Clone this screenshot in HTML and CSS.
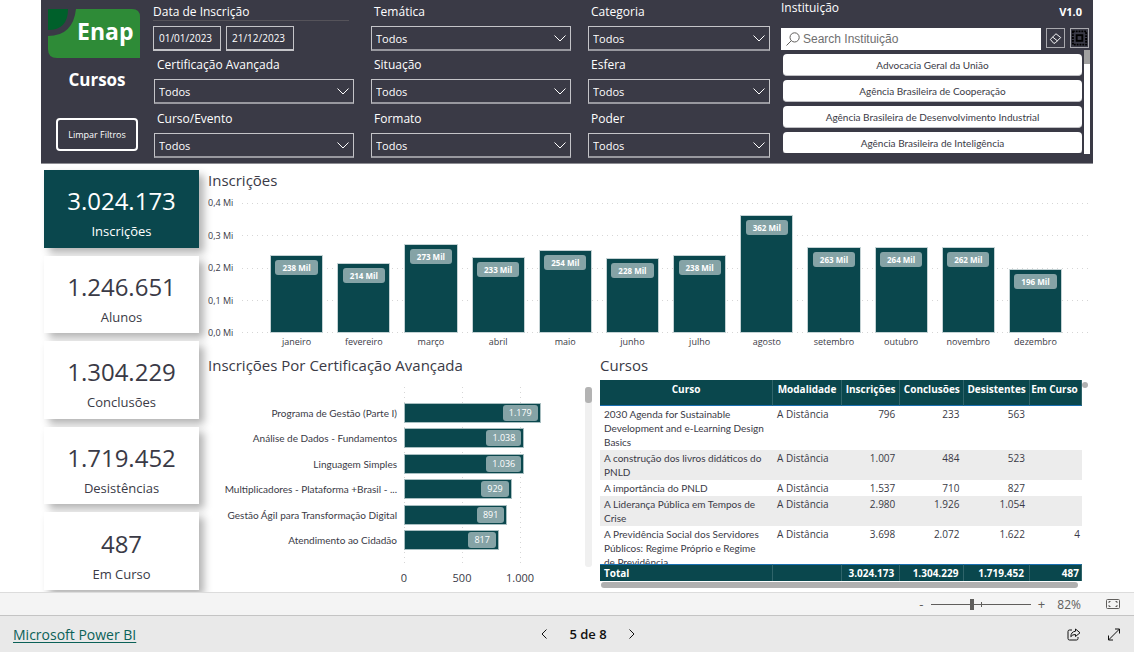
FILE: index.html
```html
<!DOCTYPE html>
<html lang="pt-BR">
<head>
<meta charset="utf-8">
<title>Enap Cursos</title>
<link rel="stylesheet" href="styles.css">
</head>
<body>
<main class="report">
  <header class="filters">
    <div class="brand">
      <svg class="logo" viewBox="0 0 92 49" role="img" aria-label="Enap">
        <path fill="#2e8b37" d="M28 0H84Q92 0 92 8V49H9Q0 49 0 40V27Q25 27 28 0Z"/>
        <path fill="#00602b" d="M0 0H20Q20 21 0 21Z"/>
        <text class="logo-text" x="29" y="31">Enap</text>
      </svg>
      <h1 class="brand-title">Cursos</h1>
      <button class="clear" type="button">Limpar Filtros</button>
    </div>
    <div class="slicers">
      <div class="field dates">
        <label for="d1">Data de Inscrição</label>
        <div class="date-row">
          <input id="d1" type="text" value="01/01/2023">
          <input type="text" value="21/12/2023" aria-label="Data final">
        </div>
      </div>
      <div class="field"><label for="s1">Temática</label><div class="pick"><select id="s1"><option>Todos</option></select><svg viewBox="0 0 12 7"><path d="M.5 .5 6 6 11.5 .5"/></svg></div></div>
      <div class="field"><label for="s2">Categoria</label><div class="pick"><select id="s2"><option>Todos</option></select><svg viewBox="0 0 12 7"><path d="M.5 .5 6 6 11.5 .5"/></svg></div></div>
      <div class="field"><label for="s3">Certificação Avançada</label><div class="pick"><select id="s3"><option>Todos</option></select><svg viewBox="0 0 12 7"><path d="M.5 .5 6 6 11.5 .5"/></svg></div></div>
      <div class="field"><label for="s4">Situação</label><div class="pick"><select id="s4"><option>Todos</option></select><svg viewBox="0 0 12 7"><path d="M.5 .5 6 6 11.5 .5"/></svg></div></div>
      <div class="field"><label for="s5">Esfera</label><div class="pick"><select id="s5"><option>Todos</option></select><svg viewBox="0 0 12 7"><path d="M.5 .5 6 6 11.5 .5"/></svg></div></div>
      <div class="field"><label for="s6">Curso/Evento</label><div class="pick"><select id="s6"><option>Todos</option></select><svg viewBox="0 0 12 7"><path d="M.5 .5 6 6 11.5 .5"/></svg></div></div>
      <div class="field"><label for="s7">Formato</label><div class="pick"><select id="s7"><option>Todos</option></select><svg viewBox="0 0 12 7"><path d="M.5 .5 6 6 11.5 .5"/></svg></div></div>
      <div class="field"><label for="s8">Poder</label><div class="pick"><select id="s8"><option>Todos</option></select><svg viewBox="0 0 12 7"><path d="M.5 .5 6 6 11.5 .5"/></svg></div></div>
    </div>
    <div class="inst">
      <div class="inst-head"><label for="q">Instituição</label><span class="version">V1.0</span></div>
      <div class="search-row">
        <div class="search">
          <svg viewBox="0 0 14 14"><circle cx="8.6" cy="5.4" r="4.6"/><path d="M5.3 8.7.5 13.5"/></svg>
          <input id="q" type="text" placeholder="Search Instituição">
        </div>
        <button class="tool" type="button" aria-label="Limpar"><svg viewBox="0 0 18 18"><path d="M3.500 10.500 9.500 4.500 14.500 8.500 8.500 14.500H7ZM6 8l5 4"/></svg></button>
        <button class="tool" type="button" aria-label="Selecionar tudo"><svg viewBox="0 0 18 18"><rect class="dots" x="2" y="2" width="14" height="14"/><rect class="box" x="6" y="6" width="6" height="6"/></svg></button>
      </div>
      <div class="inst-body">
        <div class="inst-list">
          <button type="button">Advocacia Geral da União</button>
          <button type="button">Agência Brasileira de Cooperação</button>
          <button type="button">Agência Brasileira de Desenvolvimento Industrial</button>
          <button type="button">Agência Brasileira de Inteligência</button>
        </div>
        <div class="inst-scroll"><div class="inst-thumb"></div></div>
      </div>
    </div>
  </header>

  <div class="body">
    <aside class="kpis">
      <div class="kpi active"><strong>3.024.173</strong><span>Inscrições</span></div>
      <div class="kpi"><strong>1.246.651</strong><span>Alunos</span></div>
      <div class="kpi"><strong>1.304.229</strong><span>Conclusões</span></div>
      <div class="kpi"><strong>1.719.452</strong><span>Desistências</span></div>
      <div class="kpi"><strong>487</strong><span>Em Curso</span></div>
    </aside>
    <div class="visuals">
      <section class="monthly">
        <h2>Inscrições</h2>
        <div class="columns-chart">
          <div class="y-axis"><span>0,4 Mi</span><span>0,3 Mi</span><span>0,2 Mi</span><span>0,1 Mi</span><span>0,0 Mi</span></div>
          <div class="plot">
            <div class="h-grid"><i></i><i></i><i></i><i></i><i></i></div>
            <div class="columns">
              <div class="column" style="height:59.9%"><span>238 Mil</span></div>
              <div class="column" style="height:53.8%"><span>214 Mil</span></div>
              <div class="column" style="height:68.6%"><span>273 Mil</span></div>
              <div class="column" style="height:58.7%"><span>233 Mil</span></div>
              <div class="column" style="height:63.8%"><span>254 Mil</span></div>
              <div class="column" style="height:57.4%"><span>228 Mil</span></div>
              <div class="column" style="height:59.9%"><span>238 Mil</span></div>
              <div class="column" style="height:90.6%"><span>362 Mil</span></div>
              <div class="column" style="height:66.1%"><span>263 Mil</span></div>
              <div class="column" style="height:66.4%"><span>264 Mil</span></div>
              <div class="column" style="height:65.9%"><span>262 Mil</span></div>
              <div class="column" style="height:49.4%"><span>196 Mil</span></div>
            </div>
          </div>
          <div class="months"><span>janeiro</span><span>fevereiro</span><span>março</span><span>abril</span><span>maio</span><span>junho</span><span>julho</span><span>agosto</span><span>setembro</span><span>outubro</span><span>novembro</span><span>dezembro</span></div>
        </div>
      </section>
      <section class="certs">
        <h2>Inscrições Por Certificação Avançada</h2>
        <div class="bars-chart">
          <div class="names"><span>Programa de Gestão (Parte I)</span><span>Análise de Dados - Fundamentos</span><span>Linguagem Simples</span><span>Multiplicadores - Plataforma +Brasil - ...</span><span>Gestão Ágil para Transformação Digital</span><span>Atendimento ao Cidadão</span></div>
          <div class="bar-plot">
            <div class="v-grid"><i></i><i></i><i></i></div>
            <div class="bars">
              <div class="bar" style="width:78.6%"><span>1.179</span></div>
              <div class="bar" style="width:69.2%"><span>1.038</span></div>
              <div class="bar" style="width:69.1%"><span>1.036</span></div>
              <div class="bar" style="width:61.9%"><span>929</span></div>
              <div class="bar" style="width:59.4%"><span>891</span></div>
              <div class="bar" style="width:54.5%"><span>817</span></div>
            </div>
          </div>
          <div class="v-scroll"><div class="v-thumb"></div></div>
          <div class="x-axis"><span>0</span><span>500</span><span>1.000</span></div>
        </div>
      </section>
      <section class="courses">
        <h2>Cursos</h2>
        <div class="table-row">
          <div class="table-wrap">
            <table>
              <colgroup><col class="c1"><col class="c2"><col class="c3"><col class="c4"><col class="c5"><col class="c6"></colgroup>
              <thead><tr><th>Curso</th><th>Modalidade</th><th>Inscrições</th><th>Conclusões</th><th>Desistentes</th><th>Em Curso</th></tr></thead>
              <tbody>
                <tr><td>2030 Agenda for Sustainable Development and e-Learning Design Basics</td><td>A Distância</td><td>796</td><td>233</td><td>563</td><td></td></tr>
                <tr><td>A construção dos livros didáticos do PNLD</td><td>A Distância</td><td>1.007</td><td>484</td><td>523</td><td></td></tr>
                <tr><td>A importância do PNLD</td><td>A Distância</td><td>1.537</td><td>710</td><td>827</td><td></td></tr>
                <tr><td>A Liderança Pública em Tempos de Crise</td><td>A Distância</td><td>2.980</td><td>1.926</td><td>1.054</td><td></td></tr>
                <tr><td>A Previdência Social dos Servidores Públicos: Regime Próprio e Regime de Previdência</td><td>A Distância</td><td>3.698</td><td>2.072</td><td>1.622</td><td>4</td></tr>
              </tbody>
              <tfoot><tr><td>Total</td><td></td><td>3.024.173</td><td>1.304.229</td><td>1.719.452</td><td>487</td></tr></tfoot>
            </table>
          </div>
          <div class="dot"></div>
        </div>
        <div class="h-scroll"></div>
      </section>
    </div>
  </div>
</main>
<div class="zoombar">
  <button type="button" aria-label="Reduzir">-</button>
  <div class="slider"><input type="range" min="0" max="100" value="40" aria-label="Zoom"><i class="tick"></i></div>
  <button type="button" aria-label="Ampliar">+</button>
  <span class="percent">82%</span>
  <button type="button" aria-label="Ajustar à página"><svg class="fit" viewBox="0 0 14 10"><rect x=".5" y=".5" width="13" height="9" rx="1"/><path d="M3 4V2.500H4.500M9.500 2.500H11V4M11 6V7.500H9.500M4.500 7.500H3V6"/></svg></button>
</div>
<footer class="status">
  <a href="#">Microsoft Power BI</a>
  <nav class="pager">
    <button type="button" aria-label="Anterior"><svg viewBox="0 0 6 10"><path d="M5.500.5 1 5 5.500 9.500"/></svg></button>
    <span>5 de 8</span>
    <button type="button" aria-label="Próxima"><svg viewBox="0 0 6 10"><path d="M.5.5 5 5 .5 9.500"/></svg></button>
  </nav>
  <div class="actions">
    <button type="button" aria-label="Compartilhar"><svg viewBox="0 0 14 13"><path d="M5 2H2.500Q1 2 1 3.500V10.500Q1 12 2.500 12H9.500Q11 12 11 10.500V9M8.500 1 13 4.800 8.500 8.500V6.500Q5.500 6.300 3.800 8.700 4 3.700 8.500 3.200Z"/></svg></button>
    <button type="button" aria-label="Tela cheia"><svg viewBox="0 0 14 13"><path d="M1.500 12 12.500 1M8 1H12.500V5.500M1.500 7.500V12H6"/></svg></button>
  </div>
</footer>
</body>
</html>
```
FILE: styles.css
```css
* { box-sizing: border-box; }
:root { --compact: Lato, "Open Sans", sans-serif; }
body {
  margin: 0;
  min-height: 100vh;
  display: flex;
  flex-direction: column;
  background: #fff;
  color: #3a3a46;
  font-family: "Open Sans", "Noto Sans", sans-serif;
  font-size: 10px;
}
h1, h2 { margin: 0; font-weight: 400; }
button, input, select { font: inherit; color: inherit; margin: 0; }
button { padding: 0; border: 0; background: none; }
svg { display: block; fill: none; stroke: currentColor; }

.report { flex: 1; margin: 0 41px; display: flex; flex-direction: column; }

/* Filter header */
.filters {
  display: grid;
  grid-template-columns: 113px minmax(0, 616fr) minmax(0, 323fr);
  height: 164px;
  background: #3a3a46;
  color: #fff;
  border-bottom: 1px solid #8d8d93;
}
.brand { display: flex; flex-direction: column; align-items: center; padding: 9px 1px 0 0; }
.logo { width: 92px; height: 49px; margin-right: 6px; stroke: none; }
.logo-text { font: 700 23px "Open Sans", sans-serif; fill: #fff; }
.brand-title { font-size: 17px; font-weight: 700; line-height: 24px; margin-top: 10px; }
.clear {
  width: 82px; height: 33px; margin-top: 26px;
  border: 2px solid #fff; border-radius: 4px;
  font-size: 9px; font-weight: 500;
}
.slicers {
  display: grid;
  grid-template-columns: 200fr 200fr 182fr;
  grid-template-rows: 53px 54px 54px;
  column-gap: 17px;
}
.field { display: flex; flex-direction: column; }
.field label { line-height: 16px; padding: 4px 3px 6px; font-size: 12px; }
.pick { display: grid; align-items: center; }
.pick > * { grid-area: 1 / 1; }
.pick select {
  appearance: none; height: 25px; width: 100%; padding: 0 4px;
  border: 1px solid #c4c4c8; border-bottom: 2px solid #98989f; border-radius: 0;
  background: transparent; font-size: 11px;
}
.pick svg { justify-self: end; width: 12px; height: 7px; margin-right: 5px; pointer-events: none; }
.field.dates label { padding: 4px 0 0; border-bottom: 1px solid #55535a; margin: 0 5px 5px -1px; height: 21px; }
.date-row { display: flex; gap: 5px; margin-left: -1px; }
.date-row input {
  width: 68px; height: 25px; padding: 0 5px;
  border: 1px solid #c4c4c8; border-bottom-width: 2px; background: transparent; font-size: 10px;
}

.inst { padding-left: 11px; display: flex; flex-direction: column; font-size: 12px; }
.inst-head { display: flex; justify-content: space-between; height: 28px; padding-right: 11px; line-height: 16px; }
.version { font-size: 11px; font-weight: 700; padding-top: 4px; }
.search-row { display: flex; gap: 5px; padding-right: 4px; }
.search { flex: 1; height: 22px; display: flex; align-items: center; gap: 3px; padding-left: 5px; background: #fff; color: #605e5c; }
.search svg { width: 14px; height: 14px; }
.search input { flex: 1; min-width: 0; border: 0; padding: 0; background: none; font: 12px "Liberation Sans", sans-serif; }
.search input::placeholder { color: #6f6f6f; opacity: 1; }
.tool { width: 19px; height: 20px; border: 1px solid #a9a9ae; display: grid; place-items: center; }
.tool svg { width: 17px; height: 18px; }
.tool .dots { stroke: #000; stroke-dasharray: 2 1; stroke-width: 2; }
.tool .box { stroke: #000; stroke-width: 2; }
.inst-body { display: flex; height: 104px; padding: 0 3px 0 2px; gap: 2px; }
.inst-list { flex: 1; height: 103px; overflow: hidden; display: flex; flex-direction: column; gap: 4px; padding-top: 4px; }
.inst-list button {
  flex: none; height: 22px; border-radius: 4px; background: #fff; color: #3a3a46;
  border-bottom: 1px solid #c0c0c4; font-family: var(--compact); font-size: 10px;
}
.inst-scroll { width: 6px; background: #fff; }
.inst-thumb { height: 14px; background: #a0a0a0; }

/* Report body */
.body { flex: 1; display: grid; grid-template-columns: 155px minmax(0, 1fr); gap: 9px; padding: 6px 3px 2px; }
.kpis { display: flex; flex-direction: column; gap: 8px; }
.kpi {
  flex: 1; display: flex; flex-direction: column; align-items: center; justify-content: center;
  padding-top: 9px;
  background: #fff; box-shadow: 5px 5px 8px rgba(0, 0, 0, .3);
}
.kpi strong { font-size: 24px; line-height: 32px; font-weight: 400; }
.kpi span { font-size: 13px; line-height: 20px; margin-top: 4px; }
.kpi.active { background: #0a474d; color: #fff; }

.visuals { display: grid; grid-template-columns: 392fr 490fr; grid-template-rows: 185px 1fr; }
.visuals h2 { font-size: 15px; line-height: 20px; padding-bottom: 2px; }
.monthly { grid-column: 1 / 3; }
.columns-chart { display: grid; grid-template-columns: 34px minmax(0, 1fr); grid-template-rows: 130px 18px; margin-top: 11px; }
.y-axis { display: flex; flex-direction: column; justify-content: space-between; margin: -7px 0; font-size: 9px; line-height: 14px; }
.plot { display: grid; grid-template-rows: 130px; }
.plot > *, .bar-plot > * { grid-area: 1 / 1; }
.h-grid { display: flex; flex-direction: column; justify-content: space-between; }
.h-grid i { height: 1px; background: linear-gradient(90deg, #d6d6d6 1px, transparent 1px) 0 0 / 5px 1px; }
.columns { display: flex; align-items: flex-end; gap: 14px; padding: 0 28px; }
.column { flex: 1; background: #0a474d; outline: 1px solid #c4d2d4; outline-offset: -1px; text-align: center; padding-top: 5px; }
.column span, .bar span {
  display: inline-block; background: #85a3a6; color: #fff; border-radius: 3px;
}
.column span { font-size: 8px; font-weight: 700; line-height: 15px; padding: 0 7px; }
.months { grid-column: 2; display: flex; padding: 0 21px; font-size: 9px; line-height: 18px; }
.months span { flex: 1; text-align: center; }

.certs { padding-right: 8px; }
.bars-chart { display: grid; grid-template-columns: 189px minmax(0, 1fr) 7px; grid-template-rows: 180px 22px; column-gap: 7px; margin-top: 10px; }
.names, .bars { display: flex; flex-direction: column; justify-content: space-between; padding: 16px 0 17px; }
.names { text-align: right; line-height: 20px; white-space: nowrap; font-family: var(--compact); }
.bar-plot { display: grid; }
.v-grid { display: grid; grid-template-columns: 1fr 1fr 1fr; }
.v-grid i { background: linear-gradient(#d6d6d6 1px, transparent 1px) 0 0 / 1px 5px repeat-y; }
.bar { height: 20px; background: #0a474d; outline: 1px solid #a9bfc1; outline-offset: -1px; display: flex; align-items: center; justify-content: flex-end; padding-right: 3px; }
.bar span { font-size: 9px; line-height: 16px; padding: 0 6px; }
.v-scroll { background: #f0f0f0; border-radius: 3px; }
.v-thumb { height: 16px; border-radius: 3px; background: #b3b3b3; }
.x-axis { grid-column: 2; display: grid; grid-template-columns: 1fr 1fr 1fr; font-size: 11px; line-height: 22px; }
.x-axis span { width: 40px; margin-left: -20px; text-align: center; }

/* Course table */
.courses h2 { padding-bottom: 5px; }
.table-row { display: flex; }
.table-wrap { flex: 1; height: 201px; overflow: hidden; }
.dot { width: 6px; height: 6px; border-radius: 3px; background: #b0b0b0; margin: 2px 2px 0 0; }
table { width: 100%; border-collapse: separate; border-spacing: 0; table-layout: fixed; font-size: 10px; line-height: 14px; }
.c1 { width: 35.9%; } .c2 { width: 14.3%; } .c3 { width: 12.1%; } .c4 { width: 13.3%; } .c5 { width: 13.6%; } .c6 { width: 10.8%; }
th, td { padding: 1px 5px 1px 4px; vertical-align: top; text-align: left; white-space: nowrap; }
td:first-child { white-space: normal; }
tbody td:first-child { font-family: var(--compact); }
td:nth-child(n+3) { text-align: right; }
td:last-child, th:last-child { padding-right: 2px; }
th {
  position: sticky; top: 0; height: 26px; padding: 2px 0; text-align: center; font-size: 10px; font-weight: 700;
  color: #fff; background: #0a474d; border-bottom: 1px solid #1a6fb0; border-right: 1px solid #2f646a;
}
tbody tr:nth-child(even) { background: #ececec; }
tfoot td { position: sticky; bottom: 0; color: #fff; background: #0a474d; font-weight: 700; border-top: 1px solid #1a6fb0; border-right: 1px solid #2f646a; }
.h-scroll { height: 6px; border-radius: 3px; background: #b0b0b0; margin: 1px 12px 0 1px; }

/* Bottom bars */
.zoombar {
  display: flex; align-items: center; justify-content: flex-end; height: 24px; padding-right: 14px;
  border-top: 1px solid #dcdcdc; border-bottom: 1px solid #c4c4c4; background: #f4f4f4; color: #605e5c; font-size: 13px;
}
.zoombar button { min-width: 14px; line-height: 20px; }
.slider { display: grid; align-items: center; width: 100px; margin: 0 3px; }
.slider > * { grid-area: 1 / 1; }
.slider input { appearance: none; width: 100%; height: 12px; background: linear-gradient(#605e5c, #605e5c) center / 100% 1px no-repeat; }
.slider input::-webkit-slider-thumb { appearance: none; width: 4px; height: 11px; background: #605e5c; }
.tick { width: 1px; height: 5px; background: #605e5c; justify-self: center; }
.percent { margin: 0 25px 0 9px; font-size: 12px; }
.fit { width: 14px; height: 10px; }
.status {
  display: grid; grid-template-columns: 1fr auto 1fr; align-items: center; height: 36px; padding: 0 13px;
  background: #e9e9e9; color: #111; font-size: 14px;
}
.status a { color: #0b6158; justify-self: start; text-underline-offset: 2px; }
.pager { display: flex; align-items: center; gap: 22px; font-weight: 600; font-size: 13px; padding-left: 42px; }
.pager svg { width: 6px; height: 10px; }
.actions { display: flex; justify-content: flex-end; gap: 26px; }
.actions svg { width: 14px; height: 13px; }
```
